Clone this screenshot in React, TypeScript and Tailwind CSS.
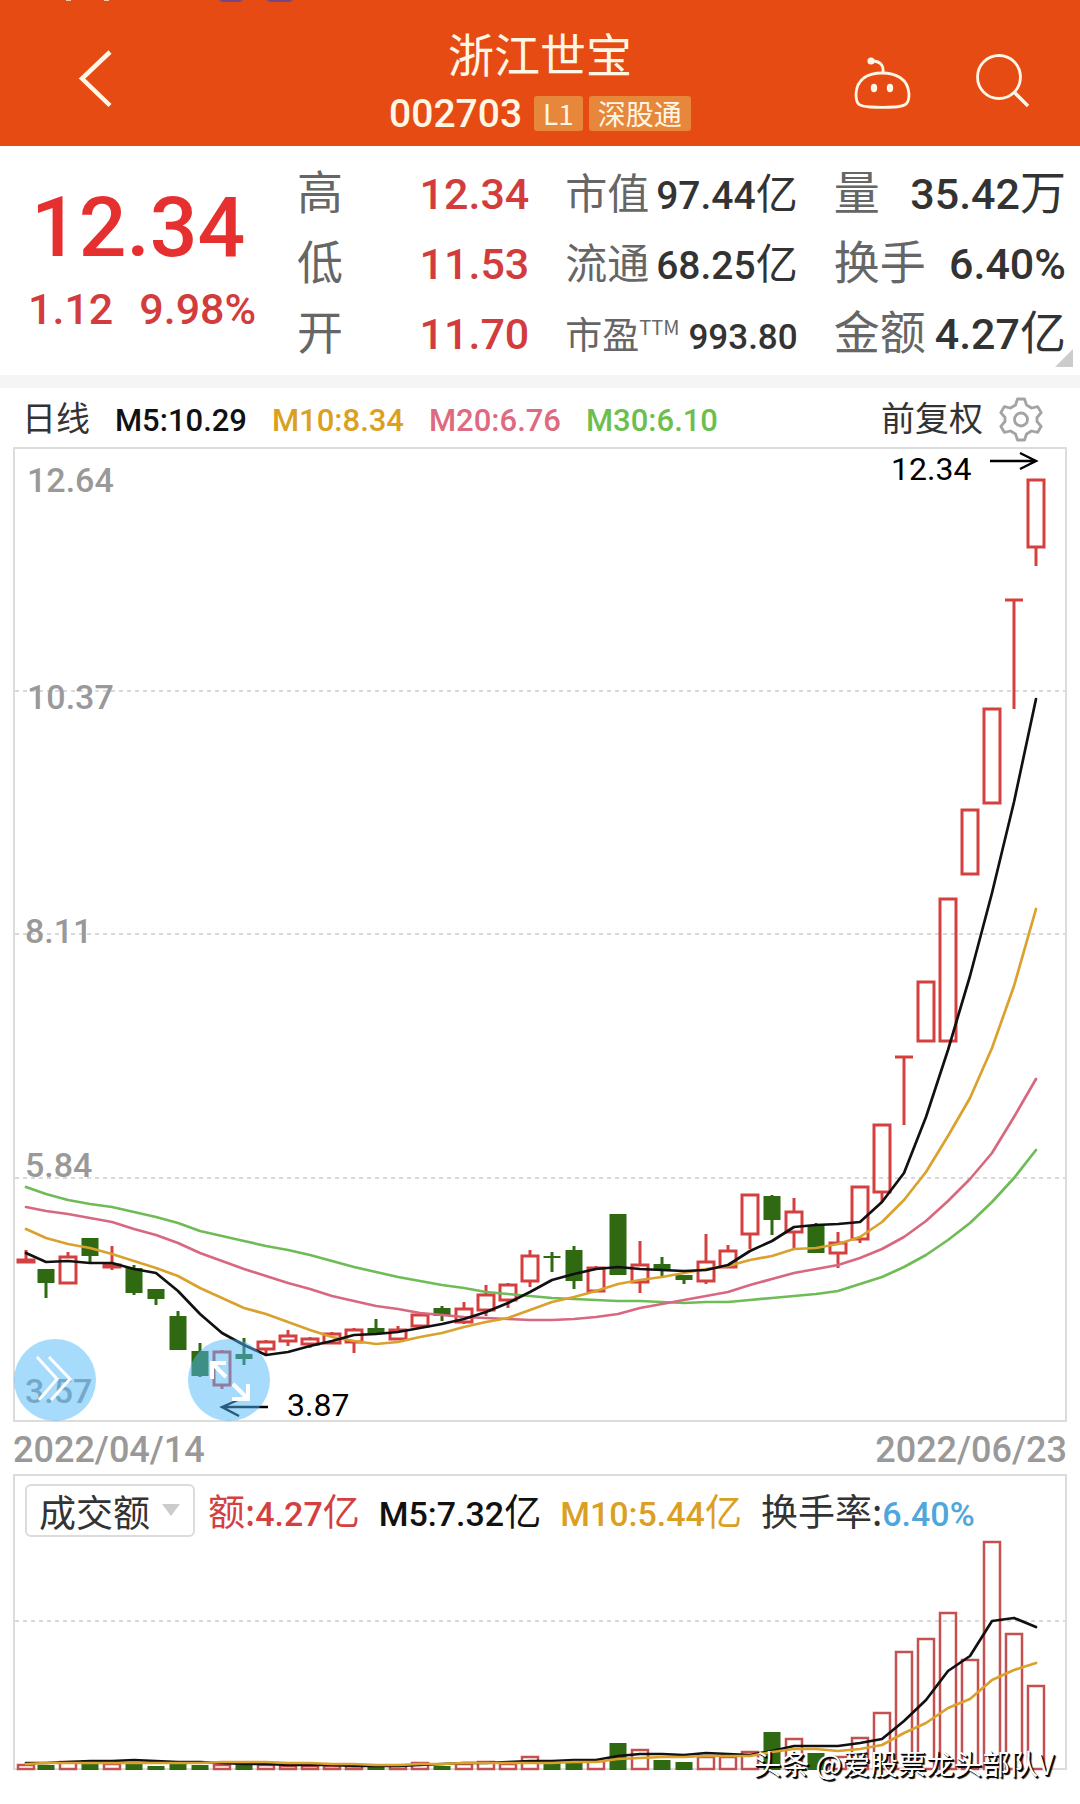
import type { ReactNode } from 'react';

type Candle = { up: boolean; high: number; top: number; bottom: number; low: number };

const FIRST_X = 24;
const STEP = 22;

const RED = '#d4403f';
const GREEN = '#2f6912';

// direction, high, body top, body bottom, low
const RAW: [number, number, number, number, number][] = [
  [1, 1250, 1260, 1262, 1262], [0, 1269, 1269, 1283, 1298], [1, 1252, 1257, 1283, 1283], [0, 1238, 1238, 1256, 1262],
  [1, 1246, 1265, 1267, 1270], [0, 1265, 1268, 1293, 1295], [0, 1289, 1289, 1299, 1305], [0, 1311, 1316, 1350, 1350],
  [0, 1343, 1351, 1376, 1377], [1, 1350, 1352, 1385, 1389], [0, 1338, 1354, 1359, 1365], [1, 1340, 1342, 1349, 1354],
  [1, 1330, 1336, 1341, 1346], [1, 1337, 1339, 1344, 1348], [1, 1332, 1334, 1343, 1343], [1, 1328, 1330, 1342, 1353],
  [0, 1319, 1328, 1333, 1333], [1, 1326, 1330, 1339, 1339], [1, 1314, 1315, 1326, 1326], [0, 1306, 1308, 1316, 1321],
  [1, 1302, 1309, 1322, 1324], [1, 1285, 1295, 1310, 1316], [1, 1283, 1285, 1300, 1308], [1, 1250, 1256, 1281, 1287],
  [0, 1252, 1256, 1258, 1272], [0, 1246, 1250, 1281, 1289], [1, 1266, 1268, 1291, 1291], [0, 1214, 1214, 1275, 1275],
  [1, 1241, 1265, 1282, 1293], [0, 1257, 1264, 1270, 1277], [0, 1275, 1275, 1280, 1284], [1, 1234, 1262, 1281, 1284],
  [1, 1245, 1251, 1267, 1267], [1, 1195, 1195, 1234, 1249], [0, 1195, 1196, 1220, 1235], [1, 1198, 1212, 1232, 1249],
  [0, 1223, 1225, 1253, 1253], [1, 1232, 1243, 1253, 1268], [1, 1187, 1187, 1239, 1243], [1, 1125, 1125, 1192, 1202],
  [1, 1057, 1057, 1057, 1125], [1, 982, 982, 1041, 1041], [1, 899, 899, 1041, 1041], [1, 810, 810, 874, 874],
  [1, 709, 709, 803, 803], [1, 600, 600, 600, 709], [1, 480, 480, 547, 566],
];

const CANDLES: Candle[] = RAW.map(([up, high, top, bottom, low]) => ({ up: up === 1, high, top, bottom, low }));

const MA5 = [
  1253, 1262, 1261, 1263, 1263, 1269, 1273, 1291, 1314, 1333, 1345, 1355, 1352, 1346, 1341, 1335, 1334, 1332, 1328, 1324,
  1319, 1312, 1303, 1292, 1280, 1274, 1269, 1267, 1269, 1270, 1271, 1270, 1265, 1251, 1241, 1227, 1225, 1224, 1222, 1202,
  1173, 1117, 1050, 976, 893, 802, 699,
];
const MA10 = [
  1229, 1238, 1244, 1248, 1254, 1261, 1268, 1276, 1288, 1298, 1308, 1314, 1322, 1330, 1337, 1341, 1344, 1342, 1337, 1333,
  1327, 1322, 1318, 1310, 1302, 1297, 1291, 1284, 1280, 1277, 1273, 1269, 1266, 1260, 1256, 1249, 1248, 1244, 1237, 1222,
  1200, 1172, 1136, 1098, 1048, 986, 909,
];
const MA20 = [
  1207, 1211, 1214, 1218, 1222, 1229, 1235, 1243, 1253, 1261, 1269, 1276, 1283, 1289, 1296, 1301, 1306, 1309, 1313, 1315,
  1317, 1318, 1319, 1320, 1320, 1319, 1317, 1314, 1308, 1304, 1300, 1296, 1292, 1285, 1279, 1273, 1269, 1265, 1258, 1249,
  1237, 1221, 1201, 1179, 1153, 1117, 1079,
];
const MA30 = [
  1187, 1194, 1200, 1204, 1207, 1212, 1217, 1223, 1231, 1236, 1241, 1246, 1250, 1255, 1261, 1267, 1272, 1277, 1281, 1285,
  1288, 1292, 1294, 1296, 1298, 1299, 1300, 1301, 1301, 1302, 1303, 1302, 1302, 1300, 1298, 1296, 1294, 1291, 1284, 1277,
  1267, 1255, 1240, 1223, 1202, 1178, 1150,
];

const VOLUME = [
  1765, 1765, 1762, 1760, 1764, 1763, 1766, 1764, 1765, 1765, 1764, 1765, 1766, 1766, 1766, 1766, 1766, 1766, 1763, 1766,
  1764, 1762, 1764, 1757, 1763, 1763, 1761, 1743, 1750, 1760, 1762, 1757, 1757, 1752, 1732, 1739, 1753, 1757, 1738, 1713,
  1652, 1639, 1613, 1660, 1542, 1634, 1686,
];
const VOL_MA5 = [
  1763, 1763, 1762, 1761, 1761, 1760, 1761, 1762, 1762, 1763, 1764, 1764, 1765, 1765, 1765, 1766, 1766, 1766, 1765, 1764,
  1763, 1763, 1762, 1761, 1761, 1760, 1760, 1756, 1754, 1754, 1755, 1753, 1754, 1755, 1751, 1746, 1746, 1746, 1743, 1739,
  1721, 1700, 1671, 1656, 1621, 1618, 1627,
];
const VOL_MA10 = [
  1764, 1763, 1763, 1763, 1763, 1763, 1763, 1763, 1763, 1762, 1762, 1762, 1763, 1763, 1764, 1764, 1765, 1765, 1764, 1764,
  1763, 1763, 1763, 1763, 1763, 1762, 1762, 1759, 1758, 1757, 1757, 1756, 1756, 1756, 1752, 1749, 1749, 1751, 1749, 1745,
  1733, 1723, 1708, 1699, 1680, 1670, 1663,
];

const xAt = (i: number) => (i === 0 ? FIRST_X + 2 : FIRST_X + i * STEP);
const toPoints = (values: number[]) => values.map((y, i) => `${xAt(i)},${y}`).join(' ');

function Line({ values, color }: { values: number[]; color: string }) {
  return <polyline points={toPoints(values)} fill="none" stroke={color} strokeWidth="2.7" strokeLinejoin="round" strokeLinecap="round" />;
}

function Header() {
  return (
    <header className="relative flex h-[146px] items-start justify-center bg-[#e64b13] text-[#fff6e6]">
      <svg className="absolute left-0 top-0 h-[3px] w-[640px]" viewBox="0 0 640 3" aria-hidden="true">
        <path d="M66 0h5M104 0h5" stroke="#f7c9a8" strokeWidth="2" />
        <path d="M219 0h24l-3 2h-18zM266 0h27l-3 2h-20z" fill="#6f4a86" />
      </svg>
      <button type="button" aria-label="返回" className="absolute left-[76px] top-[48px]">
        <svg width="40" height="62" viewBox="0 0 40 62" fill="none" stroke="currentColor" strokeWidth="4.5">
          <path d="M34 4 6 30.500l28 27" />
        </svg>
      </button>
      <div className="flex flex-col items-center">
        <h1 className="mt-[24px] text-[46px] leading-[56px]">浙江世宝</h1>
        <div className="mt-[16px] flex items-center gap-[6px] leading-[34px]">
          <span className="mr-[6px] font-[Roboto] text-[39px] font-medium">002703</span>
          <span className="h-[35px] rounded-[3px] bg-[#e6873c] px-[9px] text-[28px]">L1</span>
          <span className="h-[35px] rounded-[3px] bg-[#e6873c] px-[9px] text-[28px]">深股通</span>
        </div>
      </div>
      <div className="absolute right-[50px] top-[51px] flex gap-[65px]">
        <button type="button" aria-label="智能助手">
          <svg width="58" height="58" viewBox="0 0 58 58" fill="none" stroke="currentColor" strokeWidth="2.800">
            <path d="M29 22C16 22 4 27 3 43c0 11 3 12 14 13 8 .6 17 .6 25 0 11-1 14-3 14-13C55 27 42 22 29 22Z" />
            <path d="M30 22c1-8-3-12-11-12" />
            <circle cx="18" cy="10" r="3.600" fill="currentColor" stroke="none" />
            <ellipse cx="21" cy="37" rx="3.200" ry="4.200" fill="currentColor" stroke="none" />
            <ellipse cx="37" cy="37" rx="3.200" ry="4.200" fill="currentColor" stroke="none" />
          </svg>
        </button>
        <button type="button" aria-label="搜索">
          <svg width="54" height="58" viewBox="0 0 54 58" fill="none" stroke="currentColor" strokeWidth="2.800">
            <circle cx="23" cy="26" r="21.500" />
            <path d="M38 41 52 55" strokeWidth="3.400" />
          </svg>
        </button>
      </div>
    </header>
  );
}

function Stat({ label, children, unit, labelClass, valueClass }: { label: ReactNode; children: ReactNode; unit?: string; labelClass: string; valueClass: string }) {
  return (
    <div className="flex items-baseline justify-between whitespace-nowrap leading-[70px]">
      <dt className={`text-[#666] ${labelClass}`}>{label}</dt>
      <dd className={`text-[#333] ${labelClass}`}>
        <span className={`font-[Roboto] font-medium ${valueClass}`}>{children}</span>
        {unit}
      </dd>
    </div>
  );
}

function Quote() {
  return (
    <section className="relative flex h-[242px] border-b-[13px] border-[#f5f5f5] pt-[8px] pr-[14px]">
      <div className="w-[297px] shrink-0 font-[Roboto] font-medium text-[#e6302f]">
        <p className="mt-[24px] pl-[31px] text-[84px] leading-[100px]">12.34</p>
        <p className="mt-[3px] flex gap-[26px] pl-[28px] text-[43px] leading-[56px] text-[#d23c3c]">
          <span>1.12</span>
          <span>9.98%</span>
        </p>
      </div>
      <dl className="grid flex-1 auto-rows-[70px] grid-cols-3 items-baseline gap-x-[36px] self-start">
        <Stat label="高" labelClass="text-[46px]" valueClass="text-[43px] text-[#d23c3c]">12.34</Stat>
        <Stat label="市值" unit="亿" labelClass="text-[42px]" valueClass="text-[39px]">97.44</Stat>
        <Stat label="量" unit="万" labelClass="text-[46px]" valueClass="text-[43px]">35.42</Stat>
        <Stat label="低" labelClass="text-[46px]" valueClass="text-[43px] text-[#d23c3c]">11.53</Stat>
        <Stat label="流通" unit="亿" labelClass="text-[42px]" valueClass="text-[39px]">68.25</Stat>
        <Stat label="换手" labelClass="text-[46px]" valueClass="text-[43px]">6.40%</Stat>
        <Stat label="开" labelClass="text-[46px]" valueClass="text-[43px] text-[#d23c3c]">11.70</Stat>
        <Stat
          label={<>市盈<sup className="top-[-14px] text-[20px] leading-none">TTM</sup></>}
          labelClass="text-[37px]"
          valueClass="text-[35px]"
        >
          993.80
        </Stat>
        <Stat label="金额" unit="亿" labelClass="text-[46px]" valueClass="text-[43px]">4.27</Stat>
      </dl>
      <svg className="absolute bottom-[8px] right-[7px]" width="18" height="18" viewBox="0 0 18 18" aria-hidden="true">
        <path d="M18 0v18H0z" fill="#ccc" />
      </svg>
    </section>
  );
}

function Legend() {
  return (
    <div className="flex h-[59px] items-baseline gap-[25px] whitespace-nowrap pl-[22px] pr-[36px] font-[Roboto] text-[31px] font-medium leading-[58px]">
      <span className="font-[Noto_Sans_CJK_SC] text-[34px] font-normal text-[#333]">日线</span>
      <span className="text-[#111]">M5:10.29</span>
      <span className="text-[#dba021]">M10:8.34</span>
      <span className="text-[#de6a80]">M20:6.76</span>
      <span className="text-[#6cbf4e]">M30:6.10</span>
      <button type="button" className="ml-auto flex items-center gap-[15px] font-[Noto_Sans_CJK_SC] text-[34px] font-normal text-[#333]">
        前复权
        <svg className="mt-[4px]" width="46" height="46" viewBox="0 0 46 46" fill="none" stroke="#a3a3a3" strokeWidth="2.800" strokeLinejoin="round">
          <path d="M19.500 3h7l2 6 5 3 6.200-1.400 3.500 6L39 21.500v4l4.200 4.800-3.500 6-6.200-1.300-5 3-2 6h-7l-2-6-5-3-6.200 1.300-3.500-6L7 25.500v-4l-4.200-4.900 3.500-6L12.500 12l5-3z" />
          <circle cx="23" cy="23.500" r="6.500" />
        </svg>
      </button>
    </div>
  );
}

function PriceChart() {
  return (
    <section className="relative mx-[13px] border-2 border-[#dcdcdc]">
      <svg className="block h-auto w-full overflow-visible" viewBox="15 449 1050 971" role="img" aria-label="日线">
        <g stroke="#d9d9d9" strokeWidth="2" strokeDasharray="4 4">
          <path d="M15 691h1050M15 934h1050M15 1178h1050" />
        </g>
        <g className="font-[Roboto] text-[34px] font-medium" fill="#999">
          <text x="27" y="492">12.64</text>
          <text x="27" y="709">10.37</text>
          <text x="25" y="943">8.11</text>
          <text x="25" y="1177">5.84</text>
          <text x="25" y="1403">3.57</text>
        </g>
        {CANDLES.map((c, i) => {
          const x = xAt(i);
          const color = c.up ? RED : GREEN;
          return (
            <g key={i} stroke={color} strokeWidth="3">
              {c.high < c.top && <path d={`M${x} ${c.high}V${c.top}`} />}
              {c.low > c.bottom && <path d={`M${x} ${c.bottom}V${c.low}`} />}
              {c.top === c.bottom && <path d={`M${x - 9} ${c.top}h18`} />}
              {c.up ? (
                <rect x={x - 8} y={c.top} width="16" height={c.bottom - c.top} fill="none" />
              ) : (
                <rect x={x - 8.5} y={c.top} width="17" height={c.bottom - c.top} fill={color} stroke="none" />
              )}
            </g>
          );
        })}
        <Line values={MA30} color="#6fbb55" />
        <Line values={MA20} color="#d8687f" />
        <Line values={MA10} color="#daa12c" />
        <Line values={MA5} color="#111" />
        <g fill="none" stroke="#000" strokeWidth="2.400">
          <path d="M990 461h46M1020 453l16 8-16 8" />
          <path d="M268 1407h-45M238 1400l-16 7 17 9" />
        </g>
        <g className="font-[Roboto] text-[32px]" fill="#000">
          <text x="891" y="480">12.34</text>
          <text x="287" y="1416">3.87</text>
        </g>
      </svg>
      <button type="button" aria-label="展开" className="absolute -bottom-px -left-px size-[82px] rounded-full bg-[#4db7fa]/50">
        <svg viewBox="0 0 82 82" fill="none" stroke="#fff" strokeWidth="3">
          <path d="m23 18 20 22-18 21M35 18l21 22-19 21" />
        </svg>
      </button>
      <button type="button" aria-label="全屏" className="absolute -bottom-px left-[16.5%] size-[82px] rounded-full bg-[#4db7fa]/50">
        <svg viewBox="0 0 82 82" fill="none" stroke="#fff" strokeWidth="4">
          <path d="M24 24 38 38M45 45 60 60M38 24H24v16M60 45v15H44" />
        </svg>
      </button>
    </section>
  );
}

function VolumeChart() {
  return (
    <section className="mx-[13px] border-2 border-[#dcdcdc]">
      <div className="flex h-[62px] items-center gap-[19px] whitespace-nowrap pl-[10px] pt-[9px] text-[37px] text-[#333]">
        <div className="relative -mr-[6px]">
          <select aria-label="指标" defaultValue="成交额" className="h-[53px] w-[170px] appearance-none rounded-[6px] border-2 border-[#dcdcdc] bg-white pl-[12px] leading-[48px]">
            <option>成交额</option>
          </select>
          <svg className="pointer-events-none absolute right-[15px] top-[20px]" width="18" height="12" viewBox="0 0 18 12" aria-hidden="true">
            <path d="M0 0h18L9 12z" fill="#ccc" />
          </svg>
        </div>
        <span className="text-[#d4403f]">额:<b className="font-[Roboto] text-[34px] font-medium">4.27</b>亿</span>
        <span className="text-[#111]"><b className="font-[Roboto] text-[34px] font-medium">M5:7.32</b>亿</span>
        <span className="text-[#dba021]"><b className="font-[Roboto] text-[34px] font-medium">M10:5.44</b>亿</span>
        <span>换手率:<b className="font-[Roboto] text-[34px] font-medium text-[#4fa6dc]">6.40%</b></span>
      </div>
      <svg className="block h-auto w-full overflow-visible" viewBox="15 1538 1050 230" role="img" aria-label="成交额">
        <path d="M15 1621h1050" stroke="#d9d9d9" strokeWidth="2" strokeDasharray="4 4" />
        {VOLUME.map((y, i) =>
          CANDLES[i].up ? (
            <rect key={i} x={xAt(i) - 8} y={y} width="16" height={1769 - y} fill="none" stroke="#c4504f" strokeWidth="2.500" />
          ) : (
            <rect key={i} x={xAt(i) - 8.5} y={y} width="17" height={1770 - y} fill={GREEN} />
          ),
        )}
        <Line values={VOL_MA5} color="#111" />
        <Line values={VOL_MA10} color="#daa12c" />
      </svg>
    </section>
  );
}

export default function App() {
  return (
    <main className="relative w-full bg-white font-['Noto_Sans_CJK_SC',sans-serif] pb-[34px]">
      <Header />
      <Quote />
      <Legend />
      <PriceChart />
      <div className="flex h-[52px] items-center justify-between px-[13px] pt-[4px] font-[Roboto] text-[36px] font-medium text-[#999]">
        <time>2022/04/14</time>
        <time>2022/06/23</time>
      </div>
      <VolumeChart />
      <p className="absolute bottom-[21px] right-[26px] text-[28px] leading-[40px] text-white [text-shadow:2px_2px_1px_#000,1px_1px_0_#000]">
        头条 @爱股票龙头部队V
      </p>
    </main>
  );
}
